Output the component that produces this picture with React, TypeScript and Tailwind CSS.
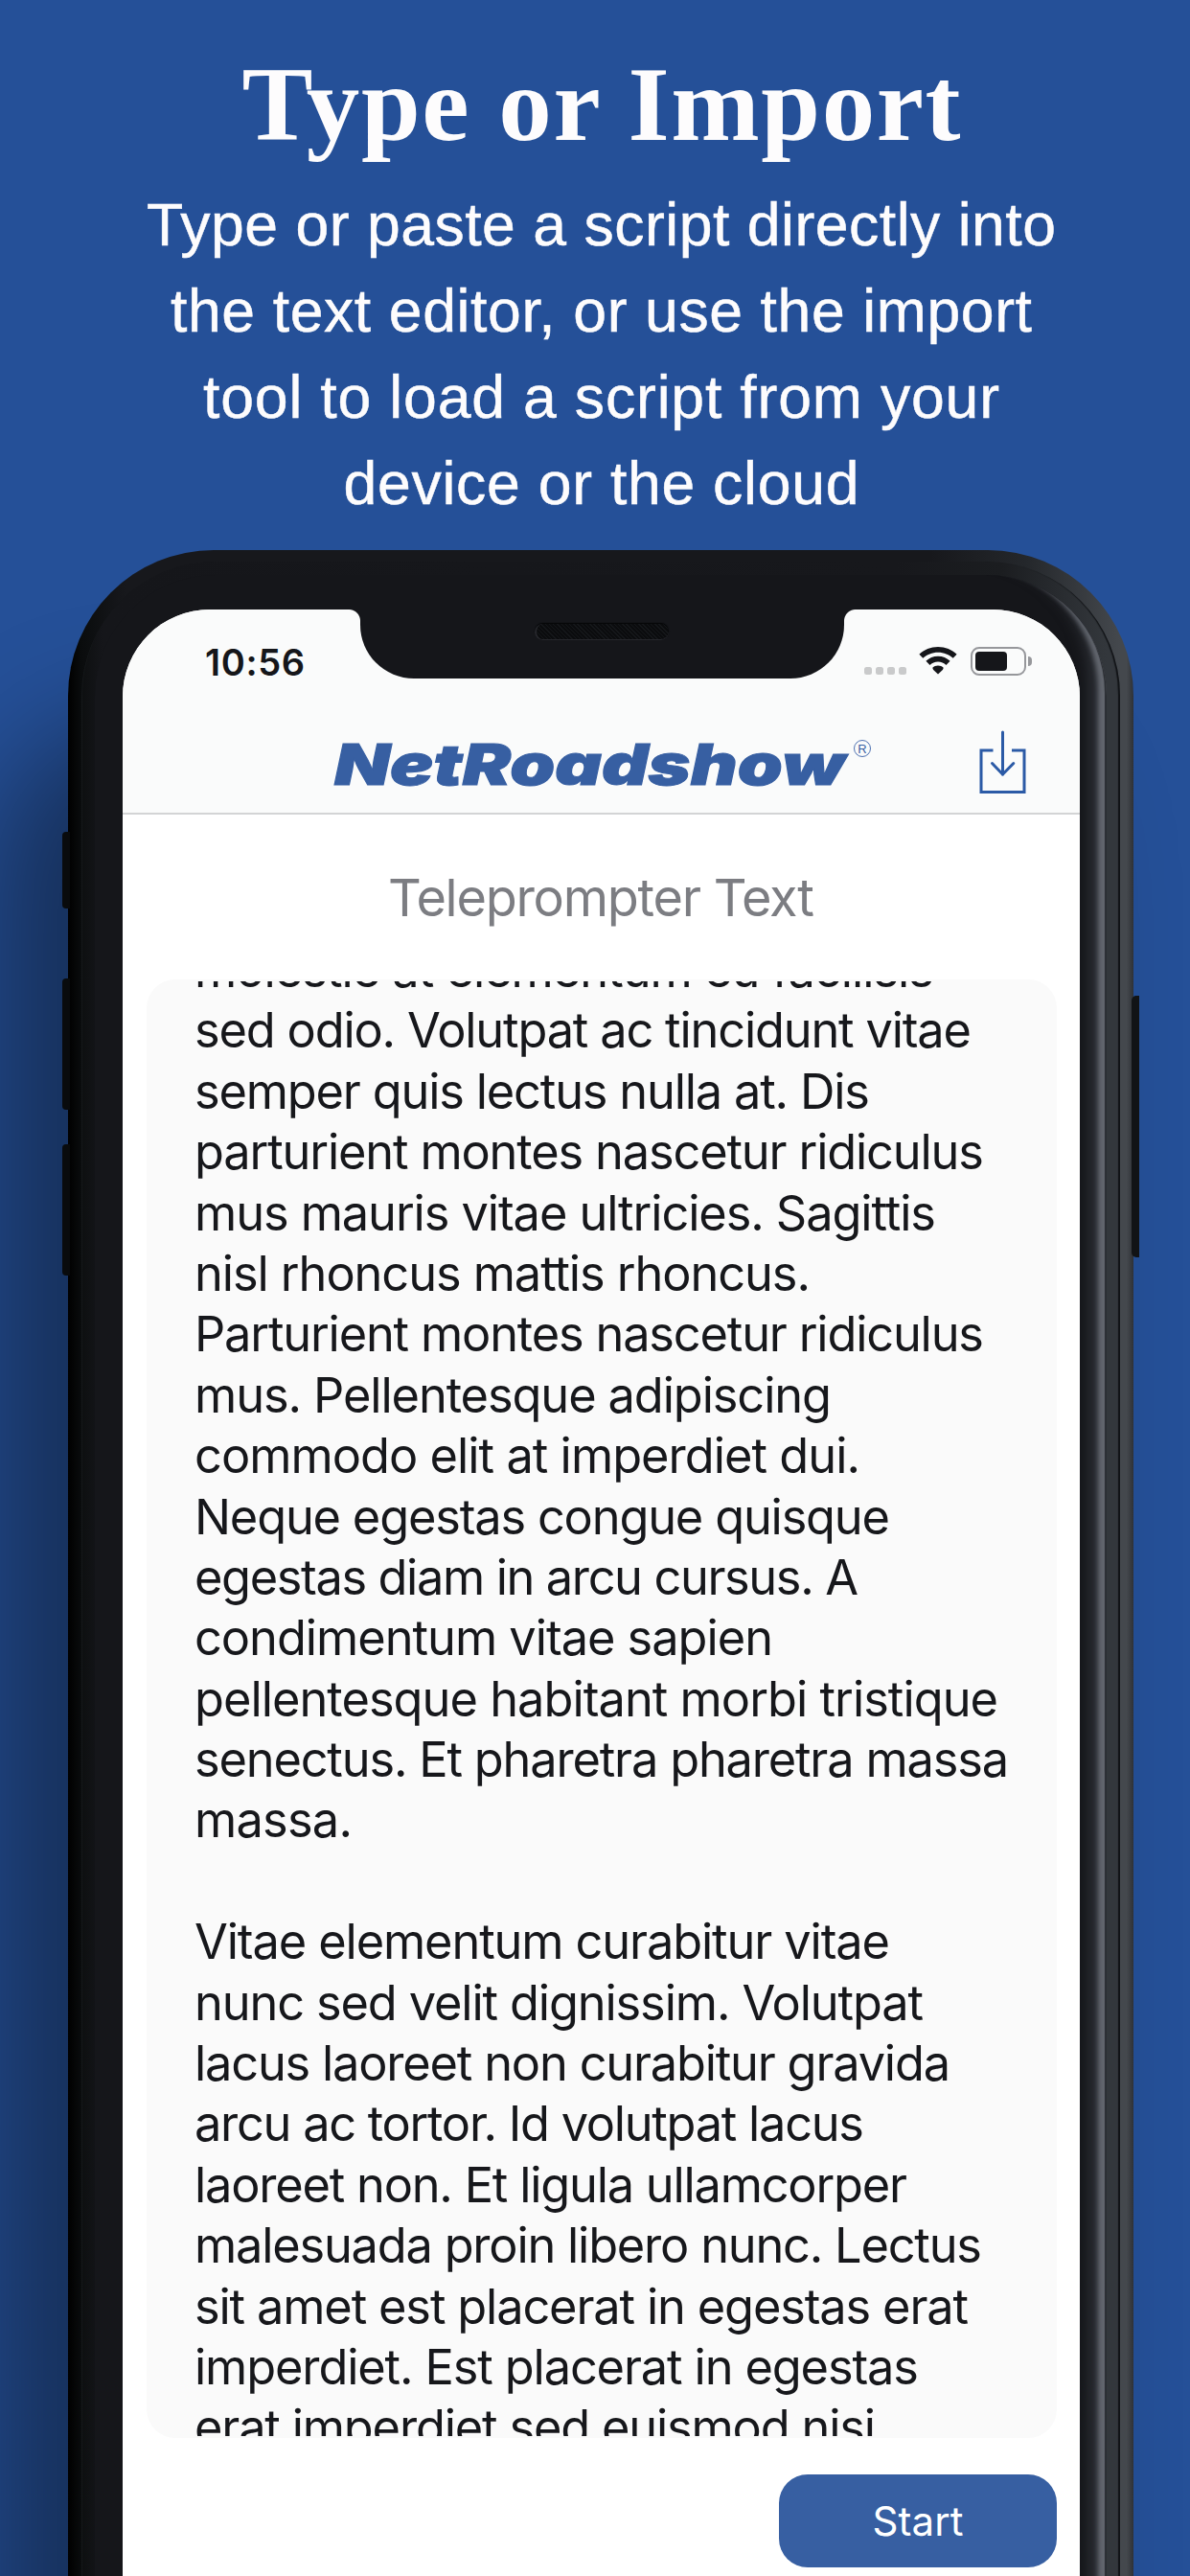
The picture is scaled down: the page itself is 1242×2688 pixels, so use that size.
import { useLayoutEffect, useRef, useState } from "react";

/* One line of text whose tracking is adjusted so that it spans `width` pixels. */
function FitLine({ text, width, className = "" }: { text: string; width: number; className?: string }) {
  const ref = useRef<HTMLSpanElement>(null);
  const [tracking, setTracking] = useState(0);
  useLayoutEffect(() => {
    const el = ref.current;
    if (!el || text.length < 2) return;
    el.style.letterSpacing = "0px";
    const natural = el.getBoundingClientRect().width;
    const value = (width - natural) / (text.length - 1);
    el.style.letterSpacing = `${value}px`;
    setTracking(value);
  }, [text, width]);
  return (
    <span
      ref={ref}
      className={"block w-max whitespace-pre " + className}
      style={{ letterSpacing: `${tracking}px`, marginRight: `${-tracking}px` }}
    >
      {text}
    </span>
  );
}

const intro: [string, number][] = [
  ["Type or paste a script directly into", 949],
  ["the text editor, or use the import", 899],
  ["tool to load a script from your", 831],
  ["device or the cloud", 538],
];

const script: [string, number][] = [
  ["molestie at elementum eu facilisis", 772],
  ["sed odio. Volutpat ac tincidunt vitae", 811],
  ["semper quis lectus nulla at. Dis", 705],
  ["parturient montes nascetur ridiculus", 824],
  ["mus mauris vitae ultricies. Sagittis", 774],
  ["nisl rhoncus mattis rhoncus.", 643],
  ["Parturient montes nascetur ridiculus", 824],
  ["mus. Pellentesque adipiscing", 665],
  ["commodo elit at imperdiet dui.", 695],
  ["Neque egestas congue quisque", 726],
  ["egestas diam in arcu cursus. A", 693],
  ["condimentum vitae sapien", 604],
  ["pellentesque habitant morbi tristique", 839],
  ["senectus. Et pharetra pharetra massa", 850],
  ["massa.", 165],
  ["", 0],
  ["Vitae elementum curabitur vitae", 726],
  ["nunc sed velit dignissim. Volutpat", 761],
  ["lacus laoreet non curabitur gravida", 789],
  ["arcu ac tortor. Id volutpat lacus", 699],
  ["laoreet non. Et ligula ullamcorper", 744],
  ["malesuada proin libero nunc. Lectus", 822],
  ["sit amet est placerat in egestas erat", 808],
  ["imperdiet. Est placerat in egestas", 756],
  ["erat imperdiet sed euismod nisi", 711],
];

function Wifi() {
  return (
    <svg width="40" height="29" viewBox="0 0 40 29" fill="#15161a">
      <path d="M20 0C27.6 0 34.500 2.900 39.600 7.700L35.700 11.800C31.600 8 26.100 5.700 20 5.700S8.400 8 4.300 11.800L.4 7.700C5.500 2.900 12.400 0 20 0Z" />
      <path d="M20 9.800C24.900 9.800 29.300 11.700 32.600 14.800L28.500 18.900C26.300 16.800 23.300 15.500 20 15.500S13.700 16.800 11.500 18.900L7.400 14.800C10.700 11.700 15.100 9.800 20 9.800Z" />
      <path d="M20 19.500C22.200 19.500 24.200 20.400 25.700 21.800Q25.500 23.300 24.800 24L20 28.600L15.200 24Q14.500 23.300 14.300 21.800C15.800 20.400 17.800 19.500 20 19.500Z" />
    </svg>
  );
}

function Battery() {
  return (
    <div className="flex items-center">
      <div className="h-[30px] w-[58px] rounded-[9px] border-2 border-[#96979b] p-[3px]">
        <div className="h-full w-[33px] rounded-[4px] bg-[#15161a]" />
      </div>
      <div className="ml-[2px] h-[10px] w-[4px] rounded-r-full bg-[#96979b]" />
    </div>
  );
}

function ImportIcon() {
  return (
    <svg width="50" height="68" viewBox="0 0 50 68" fill="none" stroke="#2b5aa6" strokeWidth="3">
      <path d="M15.500 22H3V65.500H48V22H35" />
      <path d="M25.500 3V47" strokeLinecap="round" />
      <path d="M14.500 35.500L25.500 47L36.800 35.500" strokeLinecap="round" strokeLinejoin="round" />
    </svg>
  );
}

function Notch() {
  return (
    <div className="absolute left-1/2 top-0 -ml-[264px] flex w-[529px] items-start">
      <div className="h-[12px] w-[12px] bg-[radial-gradient(circle_at_0_100%,transparent_11.500px,#15161a_12.500px)]" />
      <div className="flex h-[72px] w-[505px] justify-center rounded-b-[56px] bg-[#15161a] pt-[15px]">
        <div className="h-[17px] w-[140px] rounded-full border-b border-l-2 border-[#26272c] bg-[#0b0c0e] bg-[repeating-linear-gradient(45deg,transparent_0_2px,#15171a_2px_3px)] shadow-[0_-1px_1px_#050607]" />
      </div>
      <div className="h-[12px] w-[12px] bg-[radial-gradient(circle_at_100%_100%,transparent_11.500px,#15161a_12.500px)]" />
    </div>
  );
}

function Screen() {
  return (
    <div className="relative ml-[57px] h-[2060px] w-[999px] overflow-hidden rounded-t-[91px] bg-white font-['Inter',sans-serif]">
      <header className="h-[214px] border-b-2 border-[#d3d4d5] bg-[#fafbfb]">
        <div className="flex h-[108px] items-start pl-[86px] pt-[32px] text-[#15161a]">
          <FitLine text="10:56" width={104} className="text-[38px] font-semibold leading-[46px]" />
          <div className="ml-auto mr-[50px] flex items-start pt-[7px]">
            <div className="flex gap-[4px] pt-[21px]">
              <i className="size-[8px] rounded-[2.500px] bg-[#c9cacb]" />
              <i className="size-[8px] rounded-[2.500px] bg-[#c9cacb]" />
              <i className="size-[8px] rounded-[2.500px] bg-[#c9cacb]" />
              <i className="size-[8px] rounded-[2.500px] bg-[#c9cacb]" />
            </div>
            <div className="ml-[13.500px]">
              <Wifi />
            </div>
            <div className="ml-[14px]">
              <Battery />
            </div>
          </div>
        </div>
        <div className="flex items-start pl-[218px]">
          <svg width="548" height="90" viewBox="0 0 548 90" className="mt-[6px]">
            <text
              x="3"
              y="69"
              textLength="533"
              lengthAdjust="spacingAndGlyphs"
              fill="#375fa2"
              stroke="#375fa2"
              strokeWidth="1"
              className="font-['Inter',sans-serif] text-[59px] font-black italic"
            >
              NetRoadshow
            </text>
          </svg>
          <span className="-ml-[3px] mt-[28px] flex size-[18px] items-center justify-center rounded-full border-[1.500px] border-[#4f72b2] font-['Liberation_Sans',sans-serif] text-[13px] leading-none text-[#375fa2]">
            R
          </span>
          <div className="ml-[112px] mt-[17px]">
            <ImportIcon />
          </div>
        </div>
      </header>

      <h2 className="flex h-[172px] justify-center pt-[54px] text-[54px] leading-[66px] text-[#7c7d82]">
        <FitLine text="Teleprompter Text" width={445} />
      </h2>

      <div className="ml-[25px] mr-[24px] h-[1522px] rounded-[30px] bg-[#fafafa] py-[2px]">
        <div className="h-full overflow-hidden pl-[50px]">
          <div className="-mt-[44px] text-[50.500px] text-[#16171b]">
            {script.map(([text, width], i) => (
              <div key={i} className="h-[63.400px] leading-[63.400px]">
                {text && <FitLine text={text} width={width} />}
              </div>
            ))}
          </div>
        </div>
      </div>

      <div className="flex justify-end pr-[24px] pt-[38px]">
        <button className="flex h-[97px] w-[290px] items-center justify-center rounded-[30px] bg-[#375fa2] text-[42px] leading-[50px] text-white">
          <FitLine text="Start" width={95} />
        </button>
      </div>
    </div>
  );
}

export default function App() {
  return (
    <main className="h-[2688px] w-[1242px] overflow-hidden bg-[#255098]">
      <section className="flex h-[574px] flex-col items-center pl-[13px] text-[#fdfcfd]">
        <h1 className="mt-[47px] font-['Liberation_Serif',serif] text-[111px] font-bold leading-[124px]">
          <FitLine text="Type or Import" width={750} />
        </h1>
        <div className="mt-[18px] flex flex-col items-center font-['Liberation_Sans',sans-serif] text-[62.500px] leading-[90px] [-webkit-text-stroke:0.5px_#fdfcfd]">
          {intro.map(([text, width]) => (
            <FitLine key={text} text={text} width={width} />
          ))}
        </div>
      </section>

      <section className="relative ml-[71px] h-[2300px] w-[1112px] rounded-t-[152px] bg-[linear-gradient(to_right,#000_0,#0a0c0d_14px,#17181c_60px,#17181c_900px,#24272b_1000px,#44484d_1098px,#44484d_1105px,#2e3136_1112px)] shadow-[-80px_180px_120px_rgba(0,0,0,0.4)]">
        <div className="absolute -left-[6px] top-[294px] h-[80px] w-[8px] rounded-l-[4px] bg-[#090b0d]" />
        <div className="absolute -left-[6px] top-[447px] h-[137px] w-[8px] rounded-l-[4px] bg-[#090b0d]" />
        <div className="absolute -left-[6px] top-[620px] h-[137px] w-[8px] rounded-l-[4px] bg-[#090b0d]" />
        <div className="absolute -right-[6px] top-[465px] h-[273px] w-[8px] rounded-l-[5px] bg-[#111316]" />
        <div className="absolute inset-y-0 left-[14px] right-[14px] top-[12px] rounded-t-[140px] bg-[linear-gradient(to_right,#0d0f10_0,#15161a_22px,#17181c_850px,#1b1d20_960px,#33373c_1070px)] shadow-[inset_-2px_-1px_1px_#111316,inset_1px_-1px_0_#15181a]" />
        <div className="absolute inset-y-0 left-[28px] right-[28px] top-[26px] rounded-t-[126px] bg-[#15161a] shadow-[inset_-2px_-3px_1px_#2a2d32,inset_-9px_-7px_5px_#63676f,inset_-18px_-18px_14px_#2d3036]" />
        <div className="pt-[62px]">
          <Screen />
        </div>
        <div className="absolute left-[57px] top-[62px] w-[999px]">
          <Notch />
        </div>
      </section>
    </main>
  );
}
